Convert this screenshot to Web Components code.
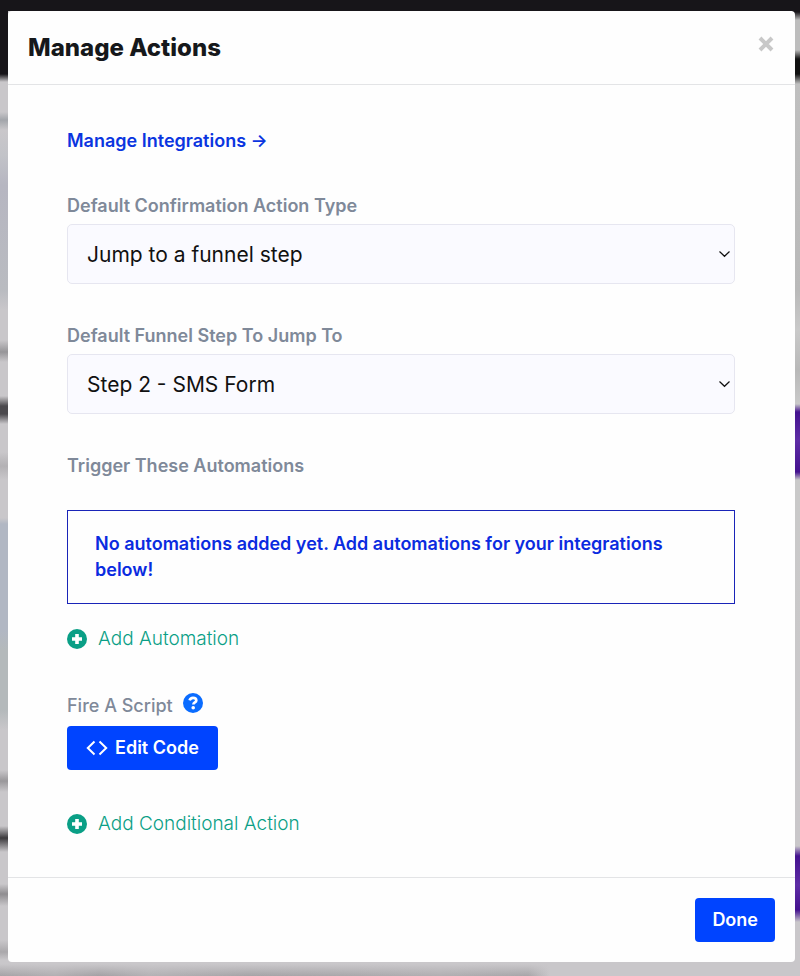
<!DOCTYPE html>
<html lang="en">
<head>
<meta charset="utf-8">
<meta name="viewport" content="width=device-width, initial-scale=1">
<title>Manage Actions</title>
<style>
  body {
    margin: 0;
    font-family: Inter, "Liberation Sans", sans-serif;
    font-size: 18px;
    line-height: 26px;
    color: #16181b;
    --blue: #0044ff;
    --green: #0a9f86;
    --muted: #7f8999;
    --line: #e3e4e6;
  }
</style>
</head>
<body>

<ma-backdrop>
  <ma-modal>
    <span slot="title">Manage Actions</span>

    <ma-link href="#integrations">Manage Integrations →</ma-link>

    <ma-select label="Default Confirmation Action Type">
      <option>Jump to a funnel step</option>
      <option>Redirect to a URL</option>
    </ma-select>

    <ma-select label="Default Funnel Step To Jump To">
      <option>Step 2 - SMS Form</option>
      <option>Step 1 - Opt In</option>
    </ma-select>

    <ma-group label="Trigger These Automations" class="wide">
      <ma-notice>No automations added yet. Add automations for your integrations below!</ma-notice>
      <ma-add>Add Automation</ma-add>
    </ma-group>

    <ma-group label="Fire A Script">
      <ma-help slot="hint"></ma-help>
      <ma-button icon="code">Edit Code</ma-button>
    </ma-group>

    <ma-add>Add Conditional Action</ma-add>

    <ma-button slot="footer">Done</ma-button>
  </ma-modal>
</ma-backdrop>

<script>
/* ------------- HELPERS ------------ */
const createTemplate = (html) => {
  const template = document.createElement("template");
  template.innerHTML = html;
  return template;
}

class Base extends HTMLElement {
  constructor(template) {
    super();
    const shadow = this.attachShadow({ mode: "open" });
    shadow.append(template.content.cloneNode(true));
  }
}

/* ------------ BACKDROP ------------ */
/* the dimmed page behind the dialog, one strip for each side */
const template_backdrop = createTemplate(/*html*/`
  <style>
    :host {
      display: block;
      box-sizing: border-box;
      min-height: 100vh;
      padding: 11px 5px 14px 8px;
      background:
        linear-gradient(#171519, #171519) 0 0 / 100% 11px no-repeat,
        linear-gradient(#c9c7ca, #c9c7ca00) 0 100% / 100% 12px no-repeat,
        linear-gradient(90deg, #a5a3a6, #b2b0b3 10%, #a3a1a4 18%, #b4b2b5 27%, #a6a4a7 45%, #a9a7aa 60%, #b1afb2 80%, #a8a6a9 96%, #c9c7ca) 0 100% / 550px 12px no-repeat,
        linear-gradient(
          #171519 74px, #c9c7ca 82px, #c9c7ca 112px, #a2a5aa 120px, #c9c7ca 130px,
          #c2c3c8 155px, #b6b6c1 185px, #b9bbc0 290px, #c9c7ca 310px, #c9c7ca 340px,
          #969598 352px, #c9c7ca 362px, #c9c7ca 396px, #4b494d 406px, #4b494d 414px,
          #c9c7ca 424px, #c9c7ca 452px, #b3b1b4 466px, #c9c7ca 480px, #c9c7ca 518px,
          #b1b7c3 524px, #b1b7c3 630px, #b4b9bb 650px, #b4b9bb 710px, #c9c7ca 730px,
          #c9c7ca 770px, #99979a 781px, #c9c7ca 792px, #c9c7ca 826px, #3c3a3d 838px,
          #c9c7ca 852px, #c9c7ca 884px, #8f8d90 894px, #c9c7ca 906px, #c9c7ca 940px,
          #aaa8ab 952px, #c9c7ca 960px) 0 0 / 8px 100% no-repeat,
        linear-gradient(
          #171519 12px, #bdbdbd 20px, #bdbdbd 50px, #111 59px, #111 74px,
          #bfbfbf 84px, #b9b9b9 290px, #c9c9c9 330px, #b8b8b8 370px, #c9c9c9 404px,
          #44128f 412px, #5e2da5 440px, #44128f 472px, #c9c9c9 480px, #c9c7ca 846px,
          #44128f 856px, #5e2da5 885px, #44128f 910px, #c9c7ca 922px) 100% 0 / 8px 100% no-repeat,
        #c9c7ca;
    }
  </style>
  <slot></slot>
`)

class Backdrop extends Base {
  constructor() {
    super(template_backdrop);
  }
}

/* -------------- MODAL ------------- */
const template_modal = createTemplate(/*html*/`
  <style>
    :host {
      display: block;
      background: #fefefe;
      border-radius: 4px;
    }

    header {
      display: flex;
      align-items: flex-start;
      justify-content: space-between;
      padding: 21px 20px;
      border-bottom: 1px solid var(--line);
    }

    h1 {
      margin: 0;
      font-size: 24px;
      line-height: 31px;
      font-weight: 800;
    }

    .close {
      display: flex;
      margin: 3px 0 0;
      padding: 0;
      border: 0;
      background: none;
      color: #c8c8c8;
      cursor: pointer;
    }

    main {
      display: flex;
      flex-direction: column;
      align-items: stretch;
      gap: 41px;
      padding: 43px 60px 40px 59px;
    }

    footer {
      display: flex;
      justify-content: flex-end;
      padding: 20px;
      border-top: 1px solid var(--line);
    }
  </style>
  <header>
    <h1><slot name="title"></slot></h1>
    <button class="close" type="button" aria-label="Close">
      <svg width="18" height="18" viewBox="0 0 18 18" fill="none" stroke="currentColor" stroke-width="4">
        <path d="M3 3l12 12M15 3L3 15"/>
      </svg>
    </button>
  </header>
  <main><slot></slot></main>
  <footer><slot name="footer"></slot></footer>
`)

class Modal extends Base {
  constructor() {
    super(template_modal);
  }
}

/* -------------- LINK -------------- */
const template_link = createTemplate(/*html*/`
  <style>
    :host {
      display: block;
      margin-bottom: -2px;
    }

    a {
      color: #0a35e0;
      font-weight: 600;
      text-decoration: none;
    }
  </style>
  <a><slot></slot></a>
`)

class Link extends Base {
  constructor() {
    super(template_link);
  }

  connectedCallback() {
    this.shadowRoot.querySelector("a").href = this.getAttribute("href");
  }
}

/* ------------- SELECT ------------- */
const template_select = createTemplate(/*html*/`
  <style>
    :host {
      display: flex;
      flex-direction: column;
      gap: 5px;
      margin-bottom: -2px;
    }

    label {
      color: var(--muted);
      font-weight: 600;
    }

    .field {
      display: grid;
      align-items: center;
    }

    select, svg { grid-area: 1 / 1; }

    select {
      appearance: none;
      width: 100%;
      height: 60px;
      padding: 0 40px 0 19px;
      border: 1px solid #e6e6f0;
      border-radius: 5px;
      background: #fafaff;
      color: #111;
      font-family: inherit;
      font-size: 21px;
    }

    svg {
      justify-self: end;
      margin-right: 4px;
      pointer-events: none;
    }
  </style>
  <label for="field"></label>
  <div class="field">
    <select id="field"></select>
    <svg width="13" height="8" viewBox="0 0 13 8" fill="none" stroke="#111" stroke-width="1.2">
      <path d="M1.5 1.5l5 4.8 5-4.8"/>
    </svg>
  </div>
`)

class Select extends Base {
  constructor() {
    super(template_select);
  }

  connectedCallback() {
    this.shadowRoot.querySelector("label").textContent = this.getAttribute("label");
    this.shadowRoot.querySelector("select").append(...this.querySelectorAll("option"));
  }
}

/* -------------- GROUP ------------- */
const template_group = createTemplate(/*html*/`
  <style>
    :host {
      display: flex;
      flex-direction: column;
      align-items: stretch;
      gap: 22px;
    }

    .title {
      display: flex;
      gap: 10px;
      margin-bottom: -15px;
      color: var(--muted);
      font-weight: 500;
    }

    :host(.wide) .title {
      margin-bottom: 9px;
      font-weight: 600;
    }
  </style>
  <div class="title">
    <span id="label"></span>
    <slot name="hint"></slot>
  </div>
  <slot></slot>
`)

class Group extends Base {
  constructor() {
    super(template_group);
  }

  connectedCallback() {
    this.shadowRoot.querySelector("#label").textContent = this.getAttribute("label");
  }
}

/* ------------- NOTICE ------------- */
const template_notice = createTemplate(/*html*/`
  <style>
    :host {
      display: block;
      padding: 20px 27px;
      border: 1px solid #1a24b8;
      color: #0a2be0;
      font-weight: 600;
    }
  </style>
  <slot></slot>
`)

class Notice extends Base {
  constructor() {
    super(template_notice);
  }
}

/* --------------- ADD -------------- */
const template_add = createTemplate(/*html*/`
  <style>
    :host { display: flex; }

    button {
      display: flex;
      align-items: center;
      gap: 11px;
      padding: 0;
      border: 0;
      background: none;
      color: var(--green);
      font: inherit;
      font-size: 19px;
      font-weight: 300;
      cursor: pointer;
    }
  </style>
  <button type="button">
    <svg width="20" height="20" viewBox="0 0 20 20">
      <circle cx="10" cy="10" r="10" fill="currentColor"/>
      <path d="M10 5v10M5 10h10" stroke="#fff" stroke-width="3.6"/>
    </svg>
    <span><slot></slot></span>
  </button>
`)

class Add extends Base {
  constructor() {
    super(template_add);
  }
}

/* -------------- HELP -------------- */
const template_help = createTemplate(/*html*/`
  <style>
    :host { display: block; }

    button {
      display: flex;
      padding: 0;
      border: 0;
      background: none;
      cursor: pointer;
    }
  </style>
  <button type="button" aria-label="Help">
    <svg width="20" height="20" viewBox="0 0 20 20">
      <circle cx="10" cy="10" r="10" fill="#0a6cff"/>
      <path d="M6.6 7.4c.5-1.8 1.8-2.6 3.4-2.6 1.9 0 3.3 1 3.3 2.6 0 2.1-2.9 2-2.9 4.1" fill="none" stroke="#fff" stroke-width="2.7"/>
      <circle cx="10.2" cy="14.8" r="1.8" fill="#fff"/>
    </svg>
  </button>
`)

class Help extends Base {
  constructor() {
    super(template_help);
  }
}

/* ------------- BUTTON ------------- */
const template_button = createTemplate(/*html*/`
  <style>
    :host { display: flex; }

    button {
      display: flex;
      align-items: center;
      gap: 7px;
      height: 44px;
      padding: 0 17px;
      border: 0;
      border-radius: 4px;
      background: var(--blue);
      color: #fff;
      font: inherit;
      font-weight: 600;
      cursor: pointer;
    }

    svg { display: none; }

    :host([icon="code"]) button { padding: 0 19px; }

    :host([icon="code"]) svg { display: block; }
  </style>
  <button type="button">
    <svg width="22" height="16" viewBox="0 0 22 16" fill="none" stroke="currentColor" stroke-width="2">
      <path d="M8.5 1.5L1.8 8l6.700 6.5M13.5 1.5L20.2 8l-6.700 6.5"/>
    </svg>
    <span><slot></slot></span>
  </button>
`)

class Button extends Base {
  constructor() {
    super(template_button);
  }
}

customElements.define("ma-backdrop", Backdrop);
customElements.define("ma-modal", Modal);
customElements.define("ma-link", Link);
customElements.define("ma-select", Select);
customElements.define("ma-group", Group);
customElements.define("ma-notice", Notice);
customElements.define("ma-add", Add);
customElements.define("ma-help", Help);
customElements.define("ma-button", Button);
</script>
</body>
</html>
